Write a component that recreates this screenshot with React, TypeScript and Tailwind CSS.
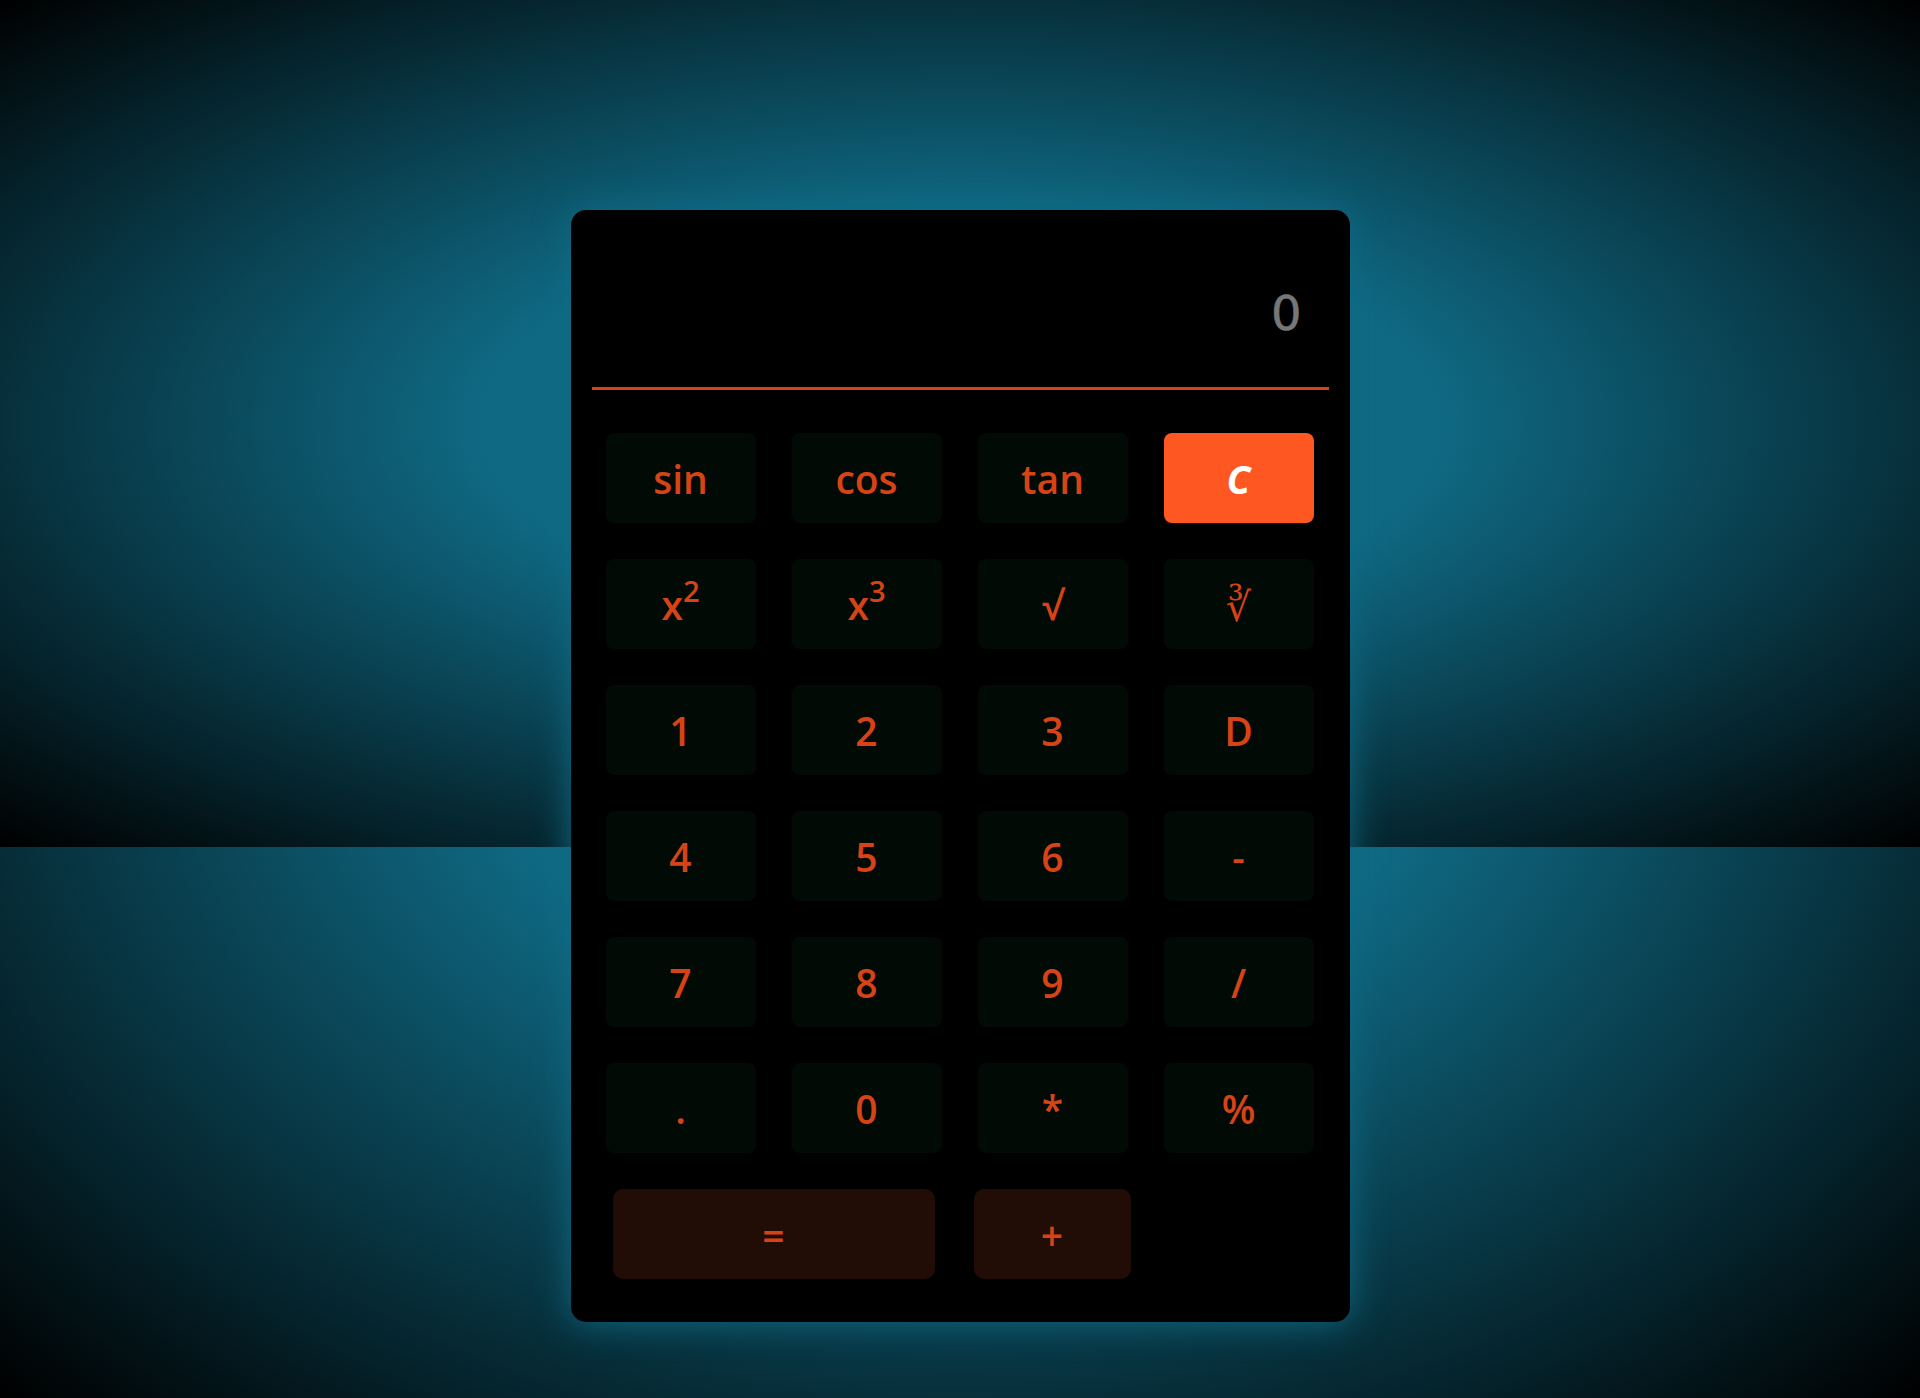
import React from "react";

type Key = { label: React.ReactNode; special?: boolean; serif?: boolean };

const rows: Key[][] = [
  [{ label: "sin" }, { label: "cos" }, { label: "tan" }, { label: "C", special: true }],
  [
    { label: <>x<sup>2</sup></> },
    { label: <>x<sup>3</sup></> },
    { label: "√" },
    { label: "∛", serif: true },
  ],
  [{ label: "1" }, { label: "2" }, { label: "3" }, { label: "D" }],
  [{ label: "4" }, { label: "5" }, { label: "6" }, { label: "-" }],
  [{ label: "7" }, { label: "8" }, { label: "9" }, { label: "/" }],
  [{ label: "." }, { label: "0" }, { label: "*" }, { label: "%" }],
];

function KeyButton({ k }: { k: Key }) {
  if (k.special) {
    return (
      <button className="flex h-[90px] items-center justify-center rounded-[8px] bg-[#ff5722] pt-[3px] text-[39px] font-bold italic text-white">
        {k.label}
      </button>
    );
  }
  return (
    <button
      className={
        k.serif
          ? "flex h-[90px] items-center justify-center rounded-[8px] bg-[#020a05] pt-[6px] text-[40px] text-[#d84315] [font-family:'DejaVu_Serif','Liberation_Serif',serif]"
          : "flex h-[90px] items-center justify-center rounded-[8px] bg-[#020a05] pt-[3px] text-[39px] font-semibold text-[#d84315]"
      }
    >
      {k.label}
    </button>
  );
}

export default function App() {
  return (
    <div className="grid min-h-[1398px] w-full [font-family:'Comic_Sans_MS','Open_Sans','DejaVu_Sans',sans-serif]">
      <div className="col-start-1 row-start-1 h-[1398px] bg-[radial-gradient(#0f6983_0%,#0f6983_35%,#000_100%)]">
        <div className="h-[847px] bg-[radial-gradient(#0f6983_0%,#0f6983_35%,#000_100%)]" />
      </div>
      <div className="col-start-1 row-start-1 flex justify-center pt-[210px]">
        <div className="h-[1112px] w-[779px] rounded-[15px] bg-black shadow-[0_0_35px_#0f6983]">
          <div className="px-[21px]">
            <div className="h-[180px] border-b-[3px] border-[#d84315] pr-[27px] pt-[67px] text-right text-[48px] leading-normal text-[#777777] [font-family:'DejaVu_Sans',sans-serif] [-webkit-text-stroke:0.6px_#777777]">
              0
            </div>
          </div>
          <div className="mt-[43px] grid grid-cols-4 gap-x-[36px] gap-y-[36px] pl-[35px] pr-[36px]">
            {rows.flat().map((k, i) => (
              <KeyButton key={i} k={k} />
            ))}
          </div>
          <div className="mt-[36px] flex gap-[39px] pl-[42px]">
            <button className="flex h-[90px] w-[322px] items-center justify-center rounded-[10px] bg-[#210c06] pt-[3px] text-[39px] font-semibold text-[#d84315]">
              =
            </button>
            <button className="flex h-[90px] w-[157px] items-center justify-center rounded-[10px] bg-[#210c06] pt-[3px] text-[39px] font-semibold text-[#d84315]">
              +
            </button>
          </div>
        </div>
      </div>
    </div>
  );
}
